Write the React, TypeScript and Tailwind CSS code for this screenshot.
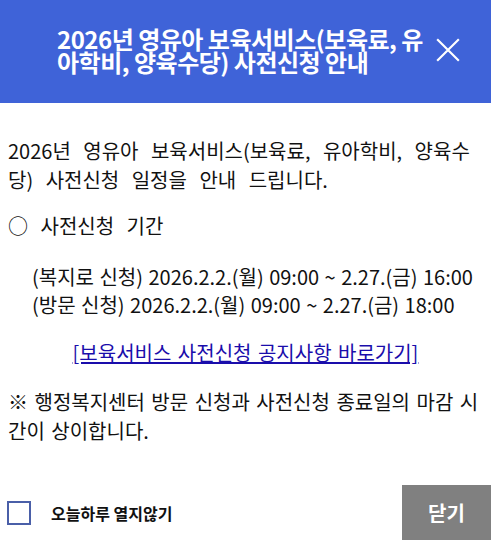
import React, { useState } from "react";

const font = { fontFamily: '"Noto Sans CJK KR", "Noto Sans", sans-serif' };

export default function App() {
  const [checked, setChecked] = useState(false);

  return (
    <div className="w-[491px] h-[540px] bg-white flex flex-col overflow-hidden" style={font}>
      <div className="h-[103px] bg-[#3f63d8] flex items-center pl-[57px] pr-[30px] pb-[4px]">
        <h2 className="flex-1 text-white font-bold text-[24px] leading-[23px] tracking-[-0.5px] break-all">
          2026년 영유아 보육서비스(보육료, 유아학비, 양육수당) 사전신청 안내
        </h2>
        <button className="ml-2 w-[26px] h-[26px] text-white">
          <svg viewBox="0 0 24 24" className="w-[26px] h-[26px]" fill="none" stroke="currentColor" strokeWidth="2">
            <path d="M2 2 L22 22 M22 2 L2 22" />
          </svg>
        </button>
      </div>

      <div className="flex-1 px-[8px] pt-[33px] text-[20px] leading-[29px] text-[#111] break-all">
        <p className="[word-spacing:8px]">2026년 영유아 보육서비스(보육료, 유아학비, 양육수당) 사전신청 일정을 안내 드립니다.</p>
        <p className="mt-[17px] [word-spacing:8px]">○ 사전신청 기간</p>
        <div className="mt-[23px] pl-[24px] leading-[28px] [word-spacing:1px]">
          <p>(복지로 신청) 2026.2.2.(월) 09:00 ~ 2.27.(금) 16:00</p>
          <p>(방문 신청) 2026.2.2.(월) 09:00 ~ 2.27.(금) 18:00</p>
        </div>
        <div className="mt-[19px] text-center [word-spacing:2px]">
          <a href="#" className="text-[#1a0dab] underline">[보육서비스 사전신청 공지사항 바로가기]</a>
        </div>
        <p className="mt-[20px] [word-spacing:2px]">※ 행정복지센터 방문 신청과 사전신청 종료일의 마감 시간이 상이합니다.</p>
      </div>

      <div className="h-[55px] flex items-center">
        <label className="flex items-center flex-1 pl-[7px] cursor-pointer">
          <input
            type="checkbox"
            checked={checked}
            onChange={(e) => setChecked(e.target.checked)}
            className="appearance-none w-[24px] h-[24px] border-2 border-[#4a5fa8] bg-white"
          />
          <span className="ml-[20px] text-[16px] font-bold text-[#111]">오늘하루 열지않기</span>
        </label>
        <button className="w-[89px] h-[55px] bg-[#808080] text-white font-bold text-[20px]">닫기</button>
      </div>
    </div>
  );
}
